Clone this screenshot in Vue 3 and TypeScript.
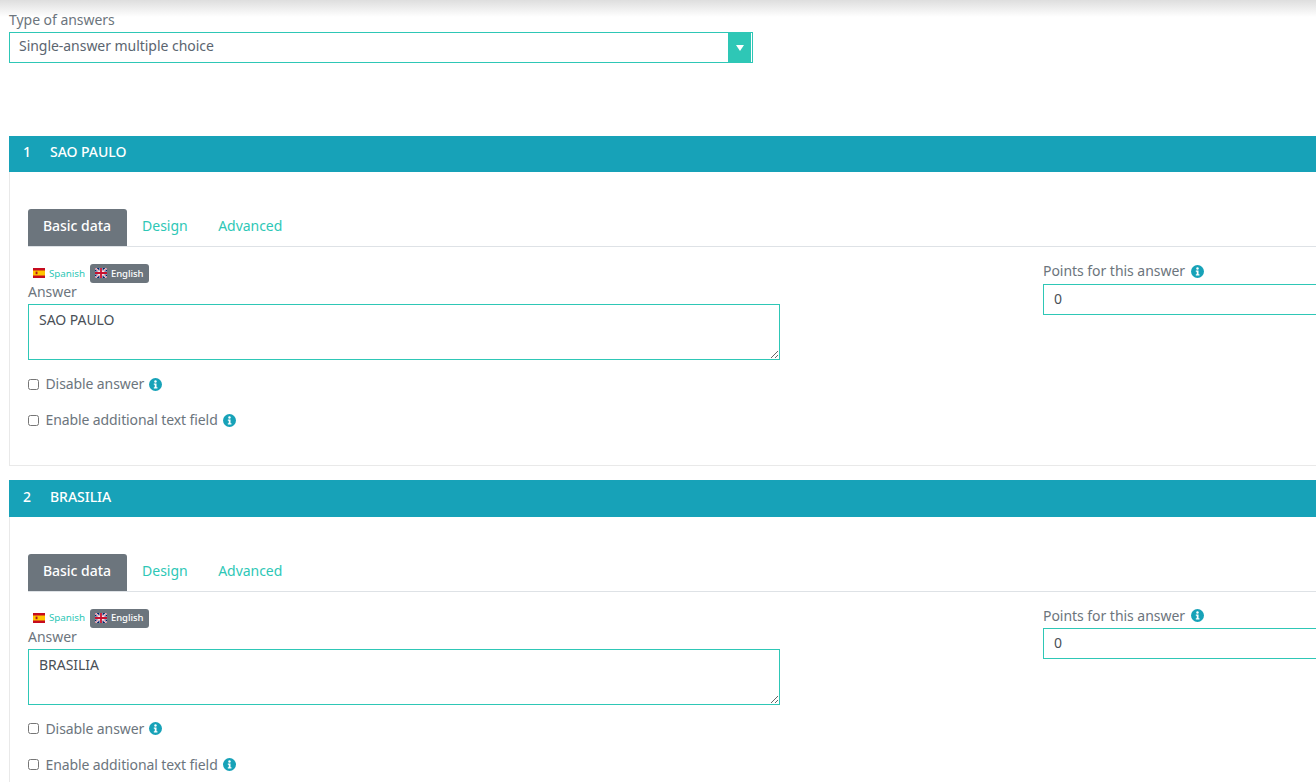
<script setup lang="ts">
interface Answer {
  id: number
  title: string
}

const answers: Answer[] = [
  { id: 1, title: 'SAO PAULO' },
  { id: 2, title: 'BRASILIA' },
]
const tabs = ['Basic data', 'Design', 'Advanced']
const checks = ['Disable answer', 'Enable additional text field']
</script>

<template>
  <div class="page">
    <div class="topshade"></div>
    <label class="label type-label">Type of answers</label>
    <div class="select-wrap">
      <select class="select">
        <option>Single-answer multiple choice</option>
      </select>
      <span class="select-btn"><i class="caret"></i></span>
    </div>

    <section v-for="a in answers" :key="a.id" class="panel">
      <header class="panel-head">
        <span class="num">{{ a.id }}</span>
        <span>{{ a.title }}</span>
      </header>
      <div class="panel-body">
        <nav class="tabs">
          <a v-for="(t, i) in tabs" :key="t" class="tab" :class="{ active: i === 0 }">{{ t }}</a>
        </nav>
        <div class="cols">
          <div class="left">
            <div class="langs">
              <span class="lang">
                <svg class="flag" viewBox="0 0 12 10" width="12" height="10">
                  <rect width="12" height="10" fill="#c60b1e" />
                  <rect y="2.5" width="12" height="5" fill="#ffc400" />
                  <rect x="2.6" y="3.6" width="1.9" height="2.6" fill="#ad1519" />
                </svg>
                Spanish
              </span>
              <span class="lang on">
                <svg class="flag" viewBox="0 0 12 10" width="12" height="10">
                  <rect width="12" height="10" fill="#012169" />
                  <path d="M0 0L12 10M12 0L0 10" stroke="#fff" stroke-width="1.8" />
                  <path d="M0 0L12 10M12 0L0 10" stroke="#c8102e" stroke-width="0.6" />
                  <path d="M6 0V10M0 5H12" stroke="#fff" stroke-width="3" />
                  <path d="M6 0V10M0 5H12" stroke="#c8102e" stroke-width="1.8" />
                </svg>
                English
              </span>
            </div>
            <label class="label answer-label">Answer</label>
            <textarea class="area" :value="a.title"></textarea>
            <label v-for="c in checks" :key="c" class="check">
              <input type="checkbox" />
              <span>{{ c }}</span>
              <svg class="info" viewBox="0 0 14 14" width="13" height="13">
                <circle cx="7" cy="7" r="7" fill="#17a2b8" />
                <circle cx="7" cy="3.7" r="1.3" fill="#fff" />
                <path d="M5.2 6h2.9v3.9h1v1.3H5.2V9.9h1V7.3h-1z" fill="#fff" />
              </svg>
            </label>
          </div>
          <div class="right">
            <label class="label points-label">
              <span>Points for this answer</span>
              <svg class="info" viewBox="0 0 14 14" width="13" height="13">
                <circle cx="7" cy="7" r="7" fill="#17a2b8" />
                <circle cx="7" cy="3.7" r="1.3" fill="#fff" />
                <path d="M5.2 6h2.9v3.9h1v1.3H5.2V9.9h1V7.3h-1z" fill="#fff" />
              </svg>
            </label>
            <input class="points" type="text" value="0" />
          </div>
        </div>
      </div>
    </section>
  </div>
</template>

<style>
html,
body {
  margin: 0;
  background: #fff;
}
</style>

<style scoped>
.page {
  position: relative;
  width: 1316px;
  height: 782px;
  overflow: hidden;
  padding: 13px 0 0 9px;
  box-sizing: border-box;
  font-family: "Noto Sans", "Open Sans", sans-serif;
  font-size: 14px;
  letter-spacing: -0.04px;
  color: #6c757d;
  background: #fff;
}
.topshade {
  position: absolute;
  inset: 0 0 auto 0;
  height: 17px;
  background: linear-gradient(#dedede, #ffffff);
}
.label {
  display: block;
  color: #6c757d;
  line-height: 15px;
}
.type-label {
  position: relative;
  height: 19px;
  line-height: 14px;
}
.select-wrap {
  position: relative;
  width: 744px;
  height: 31px;
}
.select {
  display: block;
  width: 100%;
  height: 100%;
  appearance: none;
  border: 1px solid #2ec7b6;
  border-radius: 0;
  background: #fff;
  padding: 0 0 4px 9px;
  font: inherit;
  letter-spacing: inherit;
  color: #5b6570;
  outline: none;
}
.select-btn {
  position: absolute;
  top: 0;
  right: 2px;
  width: 23px;
  height: 31px;
  background: #2ec7b6;
  display: flex;
  align-items: center;
  justify-content: center;
}
.select-wrap::after {
  content: "";
  position: absolute;
  top: 1px;
  right: 1px;
  width: 1px;
  height: 29px;
  background: #fff;
}
.caret {
  width: 0;
  height: 0;
  border-left: 4px solid transparent;
  border-right: 4px solid transparent;
  border-top: 6px solid #fff;
}
.panel {
  width: 1400px;
  margin-top: 72.75px;
}
.panel + .panel {
  margin-top: 14px;
}
.panel-head {
  height: 36.5px;
  background: #17a2b8;
  color: #fff;
  font-weight: 500;
  display: flex;
  align-items: center;
  padding: 0 0 5px 14px;
  box-sizing: border-box;
}
.num {
  width: 27px;
}
.panel-body {
  height: 294px;
  box-sizing: border-box;
  border: 1px solid #e9e9e9;
  border-top: 0;
  padding: 37px 0 0 18px;
}
.tabs {
  display: flex;
  height: 37.75px;
  box-sizing: border-box;
  border-bottom: 1px solid #dee2e6;
}
.tab {
  height: 37px;
  line-height: 33px;
  padding: 0 15px;
  margin-right: 0.6px;
  color: #2ec7b6;
  border-radius: 3px 3px 0 0;
}
.tab.active {
  background: #6c757d;
  color: #fff;
  font-weight: 500;
  padding-right: 15.6px;
}
.cols {
  display: flex;
}
.left {
  width: 752px;
}
.right {
  margin-left: 263px;
  padding-top: 13.75px;
}
.langs {
  display: flex;
  align-items: center;
  height: 19px;
  margin-top: 17px;
  font-size: 9.8px;
}
.lang {
  display: inline-flex;
  align-items: center;
  gap: 4px;
  height: 19px;
  padding: 0 5px 1px;
  box-sizing: border-box;
  color: #2ec7b6;
  border-radius: 3px;
}
.lang.on {
  background: #6c757d;
  color: #fff;
  font-weight: 500;
  font-size: 9.5px;
}
.answer-label {
  margin-top: 1px;
  height: 20px;
}
.area {
  display: block;
  width: 100%;
  height: 56px;
  box-sizing: border-box;
  border: 1px solid #2ec7b6;
  border-radius: 0;
  padding: 5px 10px;
  font: inherit;
  letter-spacing: inherit;
  color: #495057;
  outline: none;
  margin: 0;
}
.check {
  display: flex;
  align-items: center;
  height: 18px;
  margin-top: 18px;
  line-height: 18px;
  letter-spacing: -0.1px;
}
.area + .check {
  margin-top: 15px;
}
.check input {
  width: 11px;
  height: 11px;
  margin: 0 6.5px 0 0;
}
.info {
  margin-left: 5px;
  flex: none;
}
.points-label {
  display: flex;
  align-items: center;
  height: 23px;
  padding-bottom: 2px;
  box-sizing: border-box;
  line-height: 20px;
}
.points-label .info {
  margin-left: 6px;
}
.points {
  display: block;
  width: 300px;
  height: 31px;
  box-sizing: border-box;
  border: 1px solid #2ec7b6;
  border-radius: 0;
  padding: 0 10px 2px;
  font: inherit;
  letter-spacing: inherit;
  color: #495057;
  outline: none;
  margin: 0;
}
</style>
